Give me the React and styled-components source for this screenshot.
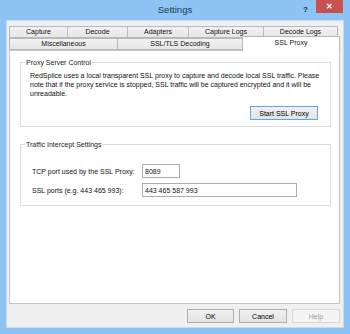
import React from "react";
import styled, { createGlobalStyle } from "styled-components";

const Global = createGlobalStyle`
  html, body {
    margin: 0;
    padding: 0;
    background: #8dc4f3;
  }
  body {
    font-family: "Liberation Sans", Arial, sans-serif;
    font-size: 7px;
    color: #111;
  }
`;

const Window = styled.div`
  width: 350px;
  height: 334px;
  display: flex;
  flex-direction: column;
  background: #8dc4f3;
  box-sizing: border-box;
  padding: 0 6px 6px 6px;
`;

const TitleBar = styled.div`
  height: 20px;
  margin: 0 -6px;
  display: grid;
  grid-template-columns: 1fr auto 1fr;
  align-items: start;
`;

const Title = styled.div`
  grid-column: 2;
  font-family: "Segoe UI", "Liberation Sans", Arial, sans-serif;
  font-size: 9.6px;
  color: #1e3a55;
  line-height: 20px;
`;

const Controls = styled.div`
  grid-column: 3;
  justify-self: end;
  display: flex;
  align-items: flex-start;
  margin-right: 7px;
`;

const HelpMark = styled.span`
  font-weight: bold;
  font-size: 8px;
  color: #1c2833;
  margin: 5px 8px 0 0;
`;

const CloseBtn = styled.div`
  width: 27px;
  height: 13px;
  background: #c75050;
  color: #fff;
  display: flex;
  align-items: center;
  justify-content: center;
  font-size: 8px;
  font-weight: bold;
`;

const Client = styled.div`
  flex: 1;
  background: #f0f0f0;
  border: 1px solid #c2dcf2;
  box-sizing: border-box;
  display: flex;
  flex-direction: column;
  padding: 5px 3px 0 2px;
`;

const TabStrip = styled.div`
  display: flex;
  flex-direction: column;
  padding-left: 1px;
`;

const TabRow = styled.div`
  display: flex;
  height: 12px;
  align-items: flex-end;
  position: relative;
  z-index: ${(p) => p.$z || 1};
`;

const Tab = styled.div`
  width: ${(p) => p.$w}px;
  height: ${(p) => (p.$active ? 15 : 12)}px;
  box-sizing: border-box;
  border: 1px solid #b9b9b9;
  border-bottom: ${(p) => (p.$active ? "none" : "1px solid #b9b9b9")};
  margin-left: -1px;
  margin-bottom: ${(p) => (p.$active ? -1 : 0)}px;
  background: ${(p) => (p.$active ? "#fff" : "linear-gradient(#f2f2f2, #e6e6e6)")};
  display: flex;
  justify-content: center;
  align-items: ${(p) => (p.$active ? "flex-start" : "center")};
  padding-top: ${(p) => (p.$active ? 1 : 0)}px;
  line-height: 10px;
  white-space: nowrap;
`;

const Panel = styled.div`
  height: 254px;
  box-sizing: border-box;
  background: #fff;
  border: 1px solid #c5c5c5;
  display: flex;
  flex-direction: column;
  padding: 7px 8px 0 10px;
  gap: 13px;
`;

const Group = styled.fieldset`
  margin: 0;
  border: 1px solid #dcdcdc;
  padding: 0 0 0 9px;
  height: ${(p) => p.$h}px;
  box-sizing: border-box;
  display: flex;
  flex-direction: column;
`;

const Legend = styled.legend`
  padding: 0 1px;
  margin-left: -5px;
  line-height: 9px;
  color: #222;
`;

const Para = styled.p`
  margin: 4px 0 0 0;
  line-height: 9px;
  white-space: nowrap;
`;

const RightRow = styled.div`
  display: flex;
  justify-content: flex-end;
  margin: 8px 12px 0 0;
`;

const Button = styled.div`
  width: ${(p) => p.$w}px;
  height: 14px;
  box-sizing: border-box;
  border: 1px solid ${(p) => (p.$primary ? "#5ea8e8" : p.$disabled ? "#d7d7d7" : "#adadad")};
  background: ${(p) => (p.$disabled ? "#f4f4f4" : "linear-gradient(#f0f0f0, #e3e3e3)")};
  color: ${(p) => (p.$disabled ? "#a0a0a0" : "#000")};
  display: flex;
  align-items: center;
  justify-content: center;
  white-space: nowrap;
`;

const Fields = styled.div`
  display: grid;
  grid-template-columns: 110px auto;
  row-gap: 5px;
  align-items: center;
  margin: 15px 0 0 2px;
`;

const Input = styled.div`
  width: ${(p) => p.$w}px;
  height: 14px;
  box-sizing: border-box;
  border: 1px solid #abadb3;
  background: #fff;
  padding-left: 2px;
  display: flex;
  align-items: center;
`;

const Footer = styled.div`
  display: flex;
  justify-content: flex-end;
  gap: 5px;
  padding-top: 5px;
`;

export default function App() {
  return (
    <>
      <Global />
      <Window>
        <TitleBar>
          <Title>Settings</Title>
          <Controls>
            <HelpMark>?</HelpMark>
            <CloseBtn>✕</CloseBtn>
          </Controls>
        </TitleBar>
        <Client>
          <TabStrip>
            <TabRow>
              <Tab $w={59}>Capture</Tab>
              <Tab $w={61}>Decode</Tab>
              <Tab $w={62}>Adapters</Tab>
              <Tab $w={76}>Capture Logs</Tab>
              <Tab $w={75}>Decode Logs</Tab>
            </TabRow>
            <TabRow $z={2}>
              <Tab $w={109}>Miscellaneous</Tab>
              <Tab $w={126}>SSL/TLS Decoding</Tab>
              <Tab $w={98} $active>SSL Proxy</Tab>
            </TabRow>
          </TabStrip>
          <Panel>
            <Group $h={69}>
              <Legend>Proxy Server Control</Legend>
              <Para>
                RedSplice uses a local transparent SSL proxy to capture and decode local SSL traffic. Please
                <br />
                note that if the proxy service is stopped, SSL traffic will be captured encrypted and it will be
                <br />
                unreadable.
              </Para>
              <RightRow>
                <Button $w={68} $primary>Start SSL Proxy</Button>
              </RightRow>
            </Group>
            <Group $h={66}>
              <Legend>Traffic Intercept Settings</Legend>
              <Fields>
                <span>TCP port used by the SSL Proxy:</span>
                <Input $w={38}>8089</Input>
                <span>SSL ports (e.g. 443 465 993):</span>
                <Input $w={155}>443 465 587 993</Input>
              </Fields>
            </Group>
          </Panel>
          <Footer>
            <Button $w={47}>OK</Button>
            <Button $w={48}>Cancel</Button>
            <Button $w={48} $disabled>Help</Button>
          </Footer>
        </Client>
      </Window>
    </>
  );
}
